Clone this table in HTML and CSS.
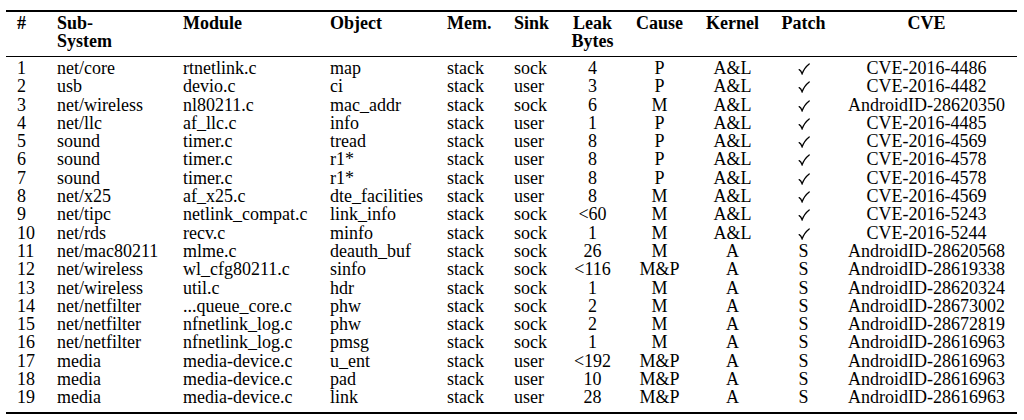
FILE: index.html
```html
<!DOCTYPE html>
<html lang="en">
<head>
<meta charset="utf-8">
<title>Kernel info-leak table</title>
<link rel="stylesheet" href="styles.css">
</head>
<body>
<table class="leaks">
  <colgroup>
    <col class="c-num"><col class="c-sub"><col class="c-mod"><col class="c-obj"><col class="c-mem"><col class="c-sink"><col class="c-leak"><col class="c-cause"><col class="c-kern"><col class="c-patch"><col class="c-cve">
  </colgroup>
  <thead>
    <tr>
      <th class="l">#</th>
      <th class="l">Sub-<br>System</th>
      <th class="l">Module</th>
      <th class="l">Object</th>
      <th class="l">Mem.</th>
      <th class="l">Sink</th>
      <th class="c">Leak<br>Bytes</th>
      <th class="c">Cause</th>
      <th class="c">Kernel</th>
      <th class="c">Patch</th>
      <th class="c">CVE</th>
    </tr>
  </thead>
  <tbody>
    <tr><td class="l">1</td><td class="l">net/core</td><td class="l">rtnetlink.c</td><td class="l">map</td><td class="l">stack</td><td class="l">sock</td><td class="c">4</td><td class="c">P</td><td class="c">A&amp;L</td><td class="c"><svg class="check" viewBox="0 0 12 12"><path d="M1.2 6.6 C2.4 7.2 3.3 8.6 4.1 10.8 C5.6 6.6 8.2 3.2 11.2 0.9"/></svg></td><td class="c">CVE-2016-4486</td></tr>
    <tr><td class="l">2</td><td class="l">usb</td><td class="l">devio.c</td><td class="l">ci</td><td class="l">stack</td><td class="l">user</td><td class="c">3</td><td class="c">P</td><td class="c">A&amp;L</td><td class="c"><svg class="check" viewBox="0 0 12 12"><path d="M1.2 6.6 C2.4 7.2 3.3 8.6 4.1 10.8 C5.6 6.6 8.2 3.2 11.2 0.9"/></svg></td><td class="c">CVE-2016-4482</td></tr>
    <tr><td class="l">3</td><td class="l">net/wireless</td><td class="l">nl80211.c</td><td class="l">mac_addr</td><td class="l">stack</td><td class="l">sock</td><td class="c">6</td><td class="c">M</td><td class="c">A&amp;L</td><td class="c"><svg class="check" viewBox="0 0 12 12"><path d="M1.2 6.6 C2.4 7.2 3.3 8.6 4.1 10.8 C5.6 6.6 8.2 3.2 11.2 0.9"/></svg></td><td class="c">AndroidID-28620350</td></tr>
    <tr><td class="l">4</td><td class="l">net/llc</td><td class="l">af_llc.c</td><td class="l">info</td><td class="l">stack</td><td class="l">user</td><td class="c">1</td><td class="c">P</td><td class="c">A&amp;L</td><td class="c"><svg class="check" viewBox="0 0 12 12"><path d="M1.2 6.6 C2.4 7.2 3.3 8.6 4.1 10.8 C5.6 6.6 8.2 3.2 11.2 0.9"/></svg></td><td class="c">CVE-2016-4485</td></tr>
    <tr><td class="l">5</td><td class="l">sound</td><td class="l">timer.c</td><td class="l">tread</td><td class="l">stack</td><td class="l">user</td><td class="c">8</td><td class="c">P</td><td class="c">A&amp;L</td><td class="c"><svg class="check" viewBox="0 0 12 12"><path d="M1.2 6.6 C2.4 7.2 3.3 8.6 4.1 10.8 C5.6 6.6 8.2 3.2 11.2 0.9"/></svg></td><td class="c">CVE-2016-4569</td></tr>
    <tr><td class="l">6</td><td class="l">sound</td><td class="l">timer.c</td><td class="l">r1*</td><td class="l">stack</td><td class="l">user</td><td class="c">8</td><td class="c">P</td><td class="c">A&amp;L</td><td class="c"><svg class="check" viewBox="0 0 12 12"><path d="M1.2 6.6 C2.4 7.2 3.3 8.6 4.1 10.8 C5.6 6.6 8.2 3.2 11.2 0.9"/></svg></td><td class="c">CVE-2016-4578</td></tr>
    <tr><td class="l">7</td><td class="l">sound</td><td class="l">timer.c</td><td class="l">r1*</td><td class="l">stack</td><td class="l">user</td><td class="c">8</td><td class="c">P</td><td class="c">A&amp;L</td><td class="c"><svg class="check" viewBox="0 0 12 12"><path d="M1.2 6.6 C2.4 7.2 3.3 8.6 4.1 10.8 C5.6 6.6 8.2 3.2 11.2 0.9"/></svg></td><td class="c">CVE-2016-4578</td></tr>
    <tr><td class="l">8</td><td class="l">net/x25</td><td class="l">af_x25.c</td><td class="l">dte_facilities</td><td class="l">stack</td><td class="l">user</td><td class="c">8</td><td class="c">M</td><td class="c">A&amp;L</td><td class="c"><svg class="check" viewBox="0 0 12 12"><path d="M1.2 6.6 C2.4 7.2 3.3 8.6 4.1 10.8 C5.6 6.6 8.2 3.2 11.2 0.9"/></svg></td><td class="c">CVE-2016-4569</td></tr>
    <tr><td class="l">9</td><td class="l">net/tipc</td><td class="l">netlink_compat.c</td><td class="l">link_info</td><td class="l">stack</td><td class="l">sock</td><td class="c">&lt;60</td><td class="c">M</td><td class="c">A&amp;L</td><td class="c"><svg class="check" viewBox="0 0 12 12"><path d="M1.2 6.6 C2.4 7.2 3.3 8.6 4.1 10.8 C5.6 6.6 8.2 3.2 11.2 0.9"/></svg></td><td class="c">CVE-2016-5243</td></tr>
    <tr><td class="l">10</td><td class="l">net/rds</td><td class="l">recv.c</td><td class="l">minfo</td><td class="l">stack</td><td class="l">sock</td><td class="c">1</td><td class="c">M</td><td class="c">A&amp;L</td><td class="c"><svg class="check" viewBox="0 0 12 12"><path d="M1.2 6.6 C2.4 7.2 3.3 8.6 4.1 10.8 C5.6 6.6 8.2 3.2 11.2 0.9"/></svg></td><td class="c">CVE-2016-5244</td></tr>
    <tr><td class="l">11</td><td class="l">net/mac80211</td><td class="l">mlme.c</td><td class="l">deauth_buf</td><td class="l">stack</td><td class="l">sock</td><td class="c">26</td><td class="c">M</td><td class="c">A</td><td class="c">S</td><td class="c">AndroidID-28620568</td></tr>
    <tr><td class="l">12</td><td class="l">net/wireless</td><td class="l">wl_cfg80211.c</td><td class="l">sinfo</td><td class="l">stack</td><td class="l">sock</td><td class="c">&lt;116</td><td class="c">M&amp;P</td><td class="c">A</td><td class="c">S</td><td class="c">AndroidID-28619338</td></tr>
    <tr><td class="l">13</td><td class="l">net/wireless</td><td class="l">util.c</td><td class="l">hdr</td><td class="l">stack</td><td class="l">sock</td><td class="c">1</td><td class="c">M</td><td class="c">A</td><td class="c">S</td><td class="c">AndroidID-28620324</td></tr>
    <tr><td class="l">14</td><td class="l">net/netfilter</td><td class="l">...queue_core.c</td><td class="l">phw</td><td class="l">stack</td><td class="l">sock</td><td class="c">2</td><td class="c">M</td><td class="c">A</td><td class="c">S</td><td class="c">AndroidID-28673002</td></tr>
    <tr><td class="l">15</td><td class="l">net/netfilter</td><td class="l">nfnetlink_log.c</td><td class="l">phw</td><td class="l">stack</td><td class="l">sock</td><td class="c">2</td><td class="c">M</td><td class="c">A</td><td class="c">S</td><td class="c">AndroidID-28672819</td></tr>
    <tr><td class="l">16</td><td class="l">net/netfilter</td><td class="l">nfnetlink_log.c</td><td class="l">pmsg</td><td class="l">stack</td><td class="l">sock</td><td class="c">1</td><td class="c">M</td><td class="c">A</td><td class="c">S</td><td class="c">AndroidID-28616963</td></tr>
    <tr><td class="l">17</td><td class="l">media</td><td class="l">media-device.c</td><td class="l">u_ent</td><td class="l">stack</td><td class="l">user</td><td class="c">&lt;192</td><td class="c">M&amp;P</td><td class="c">A</td><td class="c">S</td><td class="c">AndroidID-28616963</td></tr>
    <tr><td class="l">18</td><td class="l">media</td><td class="l">media-device.c</td><td class="l">pad</td><td class="l">stack</td><td class="l">user</td><td class="c">10</td><td class="c">M&amp;P</td><td class="c">A</td><td class="c">S</td><td class="c">AndroidID-28616963</td></tr>
    <tr><td class="l">19</td><td class="l">media</td><td class="l">media-device.c</td><td class="l">link</td><td class="l">stack</td><td class="l">user</td><td class="c">28</td><td class="c">M&amp;P</td><td class="c">A</td><td class="c">S</td><td class="c">AndroidID-28616963</td></tr>
  </tbody>
</table>
</body>
</html>
```
FILE: styles.css
```css
html, body {
  margin: 0;
  padding: 0;
  background: #fff;
}

body {
  padding: 10px 0 0 6px;
  font-family: "Liberation Serif", "Times New Roman", serif;
  font-size: 18px;
  color: #000;
}

.leaks {
  table-layout: fixed;
  width: 1011px;
  border-collapse: separate;
  border-spacing: 0;
  line-height: 18.3px;
}

.c-num   { width: 40px; }
.c-sub   { width: 126px; }
.c-mod   { width: 147px; }
.c-obj   { width: 117px; }
.c-mem   { width: 67px; }
.c-sink  { width: 57px; }
.c-leak  { width: 65px; }
.c-cause { width: 69px; }
.c-kern  { width: 77px; }
.c-patch { width: 65px; }
.c-cve   { width: 181px; }

.leaks th,
.leaks td {
  padding: 0;
  white-space: nowrap;
  vertical-align: top;
}

.leaks .l {
  text-align: left;
  padding-left: 11px;
}

.leaks .c {
  text-align: center;
}

.leaks th {
  font-weight: bold;
  border-top: 2px solid #000;
  border-bottom: 1px solid #000;
  padding-top: 2px;
  padding-bottom: 5.4px;
}

.leaks tbody tr:first-child td {
  padding-top: 2px;
}

.leaks tbody tr:last-child td {
  padding-bottom: 5.3px;
  border-bottom: 2px solid #000;
}

.check {
  width: 12px;
  height: 12px;
  vertical-align: -1px;
  fill: none;
  stroke: #000;
  stroke-width: 1.3;
  stroke-linecap: round;
}
```
